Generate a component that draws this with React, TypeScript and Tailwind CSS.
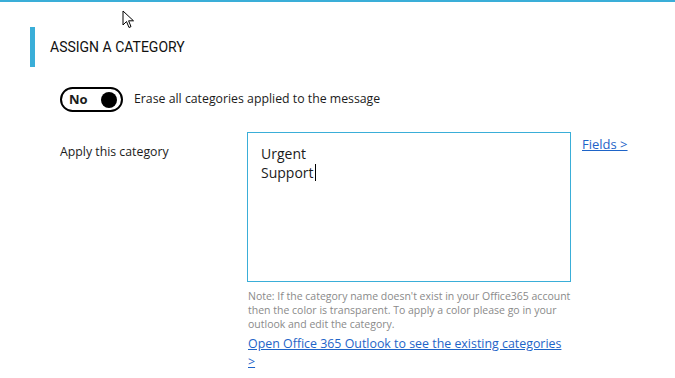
export default function App() {
  return (
    <div className="relative h-[378px] w-[675px] overflow-hidden bg-white font-['Open_Sans',sans-serif] text-[#1b1b1b]">
      {/* top accent line */}
      <div className="h-[2px] w-full bg-[#3aaed8]" />

      {/* mouse cursor */}
      <svg className="absolute left-[122px] top-[10px]" width="14" height="20" viewBox="0 0 14 20">
        <path d="M1 1 L1 15 L4.5 11.5 L7 17.5 L9 16.6 L6.6 10.8 L11.5 10.8 Z" fill="white" stroke="black" strokeWidth="1" strokeLinejoin="round" />
      </svg>

      {/* section header */}
      <div className="mt-[25px] ml-[30px] flex h-[40px] items-center border-l-[5px] border-[#3aaed8] pl-[15px]">
        <h2 className="font-['Roboto',sans-serif] text-[14px] text-[#111]">ASSIGN A CATEGORY</h2>
      </div>

      {/* toggle row */}
      <div className="mt-[20px] ml-[60px] flex items-center gap-[11px]">
        <div className="flex h-[25px] w-[63px] items-center justify-between rounded-full border-2 border-black pl-[7px] pr-[4px]">
          <span className="text-[13px] font-bold leading-none">No</span>
          <span className="h-[16px] w-[16px] rounded-full bg-black" />
        </div>
        <span className="text-[12.3px]">Erase all categories applied to the message</span>
      </div>

      {/* apply row */}
      <div className="mt-[20px] ml-[60px] flex items-start">
        <div className="w-[187px] pt-[11px] text-[12.3px]">Apply this category</div>
        <div className="w-[324px]">
          <div className="h-[150px] border border-[#3aaed8] px-[13px] pt-[11px] text-[14px] leading-[19px]">
            <div>Urgent</div>
            <div className="flex items-center">
              Support
              <span className="ml-[1px] inline-block h-[17px] w-[1px] bg-black" />
            </div>
          </div>
          <p className="mt-[7px] pl-[1px] text-[10.5px] leading-[14px] text-[#8a8a8a]">
            Note: If the category name doesn't exist in your Office365 account then the color is transparent. To apply a color please go in your outlook and edit the category.
          </p>
          <a href="#" className="mt-[4px] block pl-[1px] text-[12.4px] leading-[18px] text-[#1e64c8] underline">
            Open Office 365 Outlook to see the existing categories &gt;
          </a>
        </div>
        <a href="#" className="ml-[11px] pt-[3px] text-[13px] text-[#1e64c8] underline">Fields &gt;</a>
      </div>
    </div>
  );
}
